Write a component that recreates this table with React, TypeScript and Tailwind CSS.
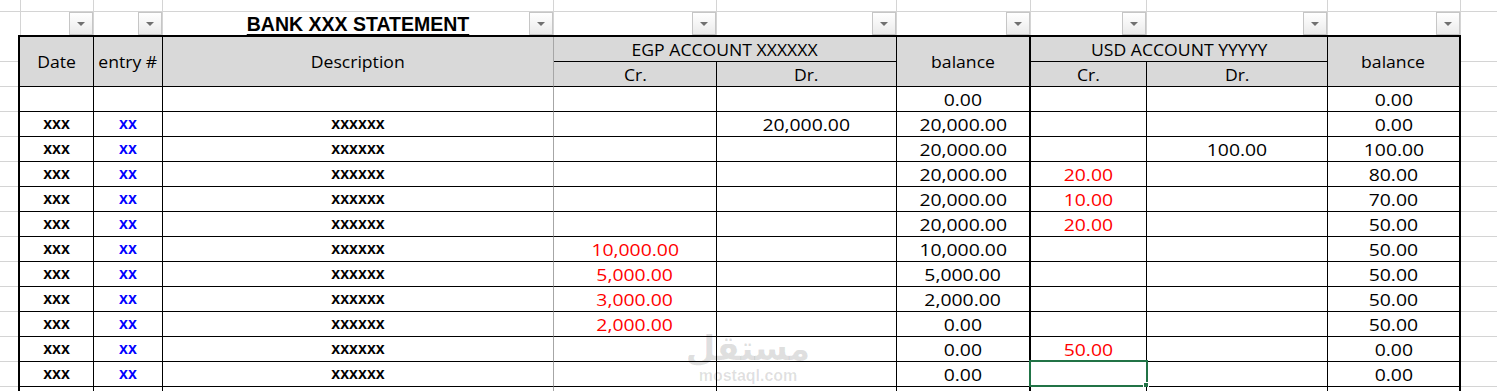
import React from "react";

const TOP_TPL =
  "grid grid-cols-[21px_73px_69px_391px_163px_180px_134px_116px_181px_133px_1fr]";
const TPL =
  "grid grid-cols-[74px_69px_391px_163px_180px_134px_116px_181px_131px]";

const hdr = "font-['Open_Sans',sans-serif] text-[16px] leading-none text-black";
const num = "font-['Open_Sans',sans-serif] text-[16px] leading-none";
const bx = "font-['Liberation_Sans',Arial,sans-serif] font-bold text-[16px] leading-none";

type Row = {
  d?: boolean;
  egpCr?: string;
  egpDr?: string;
  egpBal?: string;
  usdCr?: string;
  usdDr?: string;
  usdBal?: string;
  sel?: boolean;
};

const rows: Row[] = [
  { egpBal: "0.00", usdBal: "0.00" },
  { d: true, egpDr: "20,000.00", egpBal: "20,000.00", usdBal: "0.00" },
  { d: true, egpBal: "20,000.00", usdDr: "100.00", usdBal: "100.00" },
  { d: true, egpBal: "20,000.00", usdCr: "20.00", usdBal: "80.00" },
  { d: true, egpBal: "20,000.00", usdCr: "10.00", usdBal: "70.00" },
  { d: true, egpBal: "20,000.00", usdCr: "20.00", usdBal: "50.00" },
  { d: true, egpCr: "10,000.00", egpBal: "10,000.00", usdBal: "50.00" },
  { d: true, egpCr: "5,000.00", egpBal: "5,000.00", usdBal: "50.00" },
  { d: true, egpCr: "3,000.00", egpBal: "2,000.00", usdBal: "50.00" },
  { d: true, egpCr: "2,000.00", egpBal: "0.00", usdBal: "50.00" },
  { d: true, egpBal: "0.00", usdCr: "50.00", usdBal: "0.00" },
  { d: true, egpBal: "0.00", usdBal: "0.00", sel: true },
  {},
];

function FilterBtn() {
  return (
    <div className="w-[24px] h-[23px] border border-[#c6c6c6] bg-linear-to-b from-white to-[#ebebeb] flex items-center justify-center">
      <span className="block w-0 h-0 border-l-[4px] border-r-[4px] border-t-[4px] border-l-transparent border-r-transparent border-t-[#707070]" />
    </div>
  );
}

function H({ children }: { children: React.ReactNode }) {
  return <span className={`inline-block scale-x-[1.1] mt-[1px] ${hdr}`}>{children}</span>;
}

function N({ v, red }: { v?: string; red?: boolean }) {
  if (!v) return null;
  return (
    <span className={`inline-block scale-x-[1.21] mt-[2px] ${num} ${red ? "text-[#ff0000]" : "text-black"}`}>
      {v}
    </span>
  );
}

const cell = "h-full flex items-center justify-center border-b border-black";

function DataRow({ r }: { r: Row }) {
  return (
    <div className={`${TPL} h-[25px]`}>
      <div className={`${cell} border-r`}>
        {r.d && <span className={`${bx} text-black`}>xxx</span>}
      </div>
      <div className={`${cell} border-r`}>
        {r.d && <span className={`${bx} text-[#0000ff]`}>xx</span>}
      </div>
      <div className={`${cell} border-r border-r-[#a6a6a6]`}>
        {r.d && <span className={`${bx} text-black`}>xxxxxx</span>}
      </div>
      <div className={`${cell} border-r`}>
        <N v={r.egpCr} red />
      </div>
      <div className={`${cell} border-r`}>
        <N v={r.egpDr} />
      </div>
      <div className={`${cell} border-r-2`}>
        <N v={r.egpBal} />
      </div>
      <div className={`${cell} border-r relative`}>
        <N v={r.usdCr} red />
        {r.sel && (
          <div className="absolute -left-[2px] -top-[2px] -right-[2px] -bottom-[1px] border-2 border-[#217346]">
            <div className="absolute -right-[3px] -bottom-[3px] w-[6px] h-[6px] bg-[#217346] border border-white" />
          </div>
        )}
      </div>
      <div className={`${cell} border-r`}>
        <N v={r.usdDr} />
      </div>
      <div className={cell}>
        <N v={r.usdBal} />
      </div>
    </div>
  );
}

function SideCol() {
  return (
    <div className="flex flex-col">
      <div className="h-[2px]" />
      <div className="h-[25px] border-b border-[#d4d4d4]" />
      {Array.from({ length: 14 }).map((_, i) => (
        <div key={i} className="h-[25px] shrink-0 border-b border-[#d4d4d4]" />
      ))}
    </div>
  );
}

export default function App() {
  const g = "border-r border-[#d4d4d4]";
  return (
    <div className="relative w-[1497px] h-[391px] overflow-hidden bg-white">
      {/* top partial row */}
      <div className={`${TOP_TPL} h-[12px] border-b border-[#d4d4d4]`}>
        {Array.from({ length: 10 }).map((_, i) => (
          <div key={i} className={g} />
        ))}
        <div />
      </div>
      {/* filter row */}
      <div className={`${TOP_TPL} h-[23px]`}>
        <div className={g} />
        <div className={`${g} flex justify-end`}>
          <FilterBtn />
        </div>
        <div className={`${g} flex justify-end`}>
          <FilterBtn />
        </div>
        <div className={`${g} grid grid-cols-[24px_1fr_24px]`}>
          <div />
          <div className="flex items-start justify-center pt-[1px]">
            <span className="font-['Liberation_Sans',Arial,sans-serif] font-bold text-[19.5px] leading-[22px] text-black underline decoration-2 underline-offset-[3px]">
              BANK XXX STATEMENT
            </span>
          </div>
          <FilterBtn />
        </div>
        {Array.from({ length: 6 }).map((_, i) => (
          <div key={i} className={`${g} flex justify-end`}>
            <FilterBtn />
          </div>
        ))}
        <div />
      </div>
      {/* table */}
      <div className="flex">
        <div className="w-[18px]">
          <SideCol />
        </div>
        <div className="border-t-2 border-l-2 border-r-2 border-black">
          {/* header */}
          <div className={`${TPL} grid-rows-[25px_25px] bg-[#d9d9d9]`}>
            <div className="col-start-1 row-start-1 row-span-2 flex items-center justify-center border-r border-b border-black">
              <H>Date</H>
            </div>
            <div className="col-start-2 row-start-1 row-span-2 flex items-center justify-center border-r border-b border-black">
              <H>entry #</H>
            </div>
            <div className="col-start-3 row-start-1 row-span-2 flex items-center justify-center border-r border-b border-black border-r-[#a6a6a6]">
              <H>Description</H>
            </div>
            <div className="col-start-4 col-span-2 row-start-1 flex items-center justify-center border-r border-b border-black">
              <H>EGP ACCOUNT XXXXXX</H>
            </div>
            <div className="col-start-6 row-start-1 row-span-2 flex items-center justify-center border-r-2 border-b border-black">
              <H>balance</H>
            </div>
            <div className="col-start-7 col-span-2 row-start-1 flex items-center justify-center border-r border-b border-black">
              <H>USD ACCOUNT YYYYY</H>
            </div>
            <div className="col-start-9 row-start-1 row-span-2 flex items-center justify-center border-b border-black">
              <H>balance</H>
            </div>
            <div className="col-start-4 row-start-2 flex items-center justify-center border-r border-b border-black">
              <H>Cr.</H>
            </div>
            <div className="col-start-5 row-start-2 flex items-center justify-center border-r border-b border-black">
              <H>Dr.</H>
            </div>
            <div className="col-start-7 row-start-2 flex items-center justify-center border-r border-b border-black">
              <H>Cr.</H>
            </div>
            <div className="col-start-8 row-start-2 flex items-center justify-center border-r border-b border-black">
              <H>Dr.</H>
            </div>
          </div>
          {rows.map((r, i) => (
            <DataRow key={i} r={r} />
          ))}
        </div>
        <div className="flex-1">
          <SideCol />
        </div>
      </div>
      {/* watermark */}
      <div className="absolute left-[696px] top-[329px] w-[104px] flex flex-col items-center pointer-events-none text-[#000000]/[0.12]">
        <span className="font-['DejaVu_Sans',sans-serif] font-bold text-[34px] leading-[38px]" dir="rtl">
          مستقل
        </span>
        <span className="font-['Liberation_Sans',Arial,sans-serif] font-bold text-[16px] leading-[18px]">
          mostaql.com
        </span>
      </div>
    </div>
  );
}
